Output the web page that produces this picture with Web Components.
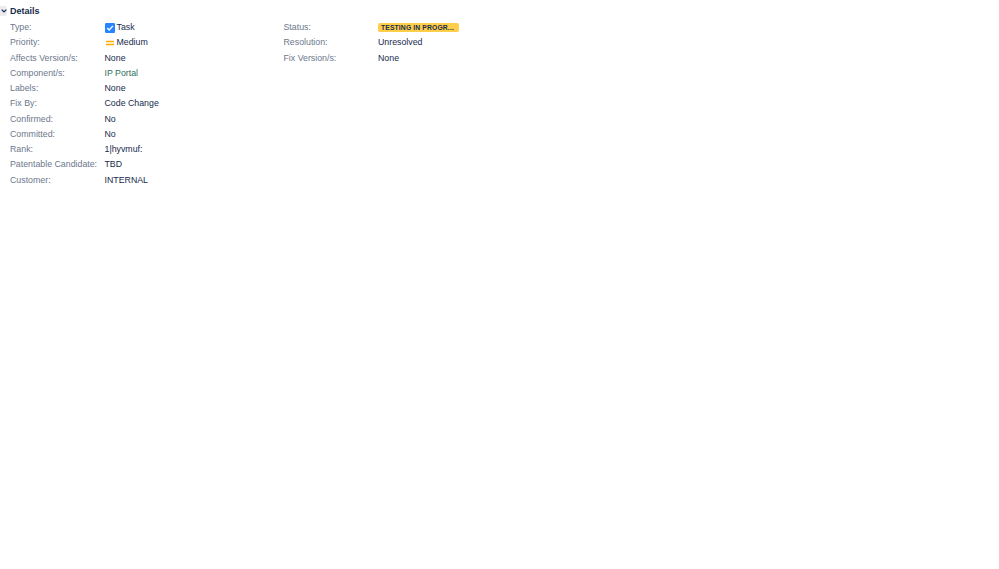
<!DOCTYPE html>
<html>
<head>
<meta charset="utf-8">
<title>Details</title>
<style>
  html, body { margin: 0; padding: 0; background: #fff; }
  body { font-family: "Liberation Sans", Arial, sans-serif; font-size: 8.8px; }
</style>
</head>
<body>
<details-module>
  <detail-column>
    <detail-row label="Type:"><issue-icon kind="task"></issue-icon>Task</detail-row>
    <detail-row label="Priority:"><issue-icon kind="medium"></issue-icon>Medium</detail-row>
    <detail-row label="Affects Version/s:">None</detail-row>
    <detail-row label="Component/s:"><span style="color:#2f7058">IP Portal</span></detail-row>
    <detail-row label="Labels:">None</detail-row>
    <detail-row label="Fix By:">Code Change</detail-row>
    <detail-row label="Confirmed:">No</detail-row>
    <detail-row label="Committed:">No</detail-row>
    <detail-row label="Rank:">1|hyvmuf:</detail-row>
    <detail-row label="Patentable Candidate:">TBD</detail-row>
    <detail-row label="Customer:">INTERNAL</detail-row>
  </detail-column>
  <detail-column>
    <detail-row label="Status:"><status-lozenge>TESTING IN PROGR...</status-lozenge></detail-row>
    <detail-row label="Resolution:">Unresolved</detail-row>
    <detail-row label="Fix Version/s:">None</detail-row>
  </detail-column>
</details-module>
<script>
class DetailsModule extends HTMLElement {
  connectedCallback() {
    this.attachShadow({ mode: 'open' });
    this.shadowRoot.innerHTML = `
      <style>
        :host { display: block; padding: 4px 0 0 0; color: #172b4d; }
        .head { display: flex; align-items: center; height: 13px; gap: 3px; font-size: 9px; font-weight: 700; color: #172b4d; }
        .toggle { width: 7px; height: 10px; background: #ebecf0; border-radius: 0 3px 3px 0; display: flex; align-items: center; justify-content: center; }
        .cols { display: grid; grid-template-columns: 273.5px 1fr; padding: 3.2px 0 0 10px; }
      </style>
      <div class="head">
        <span class="toggle"><svg width="6" height="4" viewBox="0 0 6 4"><path d="M.7.7 3 3 5.3.7" fill="none" stroke="#172b4d" stroke-width="1.2"/></svg></span>
        <span>Details</span>
      </div>
      <div class="cols"><slot></slot></div>
    `;
  }
}
class DetailColumn extends HTMLElement {
  connectedCallback() {
    this.attachShadow({ mode: 'open' });
    this.shadowRoot.innerHTML = `
      <style>:host { display: flex; flex-direction: column; }</style>
      <slot></slot>
    `;
  }
}
class DetailRow extends HTMLElement {
  connectedCallback() {
    this.attachShadow({ mode: 'open' });
    this.shadowRoot.innerHTML = `
      <style>
        :host { display: grid; grid-template-columns: 94.5px 1fr; height: 15.25px; line-height: 15.25px; font-size: 8.8px; }
        .label { color: #6b778c; white-space: nowrap; }
        .value { color: #172b4d; display: flex; align-items: center; white-space: nowrap; }
      </style>
      <div class="label"></div>
      <div class="value"><slot></slot></div>
    `;
    this.shadowRoot.querySelector('.label').textContent = this.getAttribute('label');
  }
}
class IssueIcon extends HTMLElement {
  connectedCallback() {
    this.attachShadow({ mode: 'open' });
    const task = `<svg width="10" height="10" viewBox="0 0 10 10"><rect width="10" height="10" rx="1.2" fill="#2684ff"/><path d="M2.2 5 4.2 7 7.9 2.9" fill="none" stroke="#fff" stroke-width="1.4"/></svg>`;
    const medium = `<svg width="10" height="10" viewBox="0 0 10 10"><path d="M1 3.5h8M1 6.5h8" stroke="#ffab00" stroke-width="1.5"/></svg>`;
    this.shadowRoot.innerHTML = `
      <style>:host { display: inline-flex; margin-right: 2px; } svg { display: block; }</style>
      ${this.getAttribute('kind') === 'task' ? task : medium}
    `;
  }
}
class StatusLozenge extends HTMLElement {
  connectedCallback() {
    this.attachShadow({ mode: 'open' });
    this.shadowRoot.innerHTML = `
      <style>
        :host { display: inline-block; box-sizing: border-box; width: 81px; height: 9px; line-height: 9px; margin-top: -1px; padding: 0 3px; background: #ffcf4a; border-radius: 2px; color: #172b4d; font-size: 6.8px; font-weight: 700; letter-spacing: 0.12px; white-space: nowrap; }
      </style>
      <slot></slot>
    `;
  }
}
customElements.define('details-module', DetailsModule);
customElements.define('detail-column', DetailColumn);
customElements.define('detail-row', DetailRow);
customElements.define('issue-icon', IssueIcon);
customElements.define('status-lozenge', StatusLozenge);
</script>
</body>
</html>
